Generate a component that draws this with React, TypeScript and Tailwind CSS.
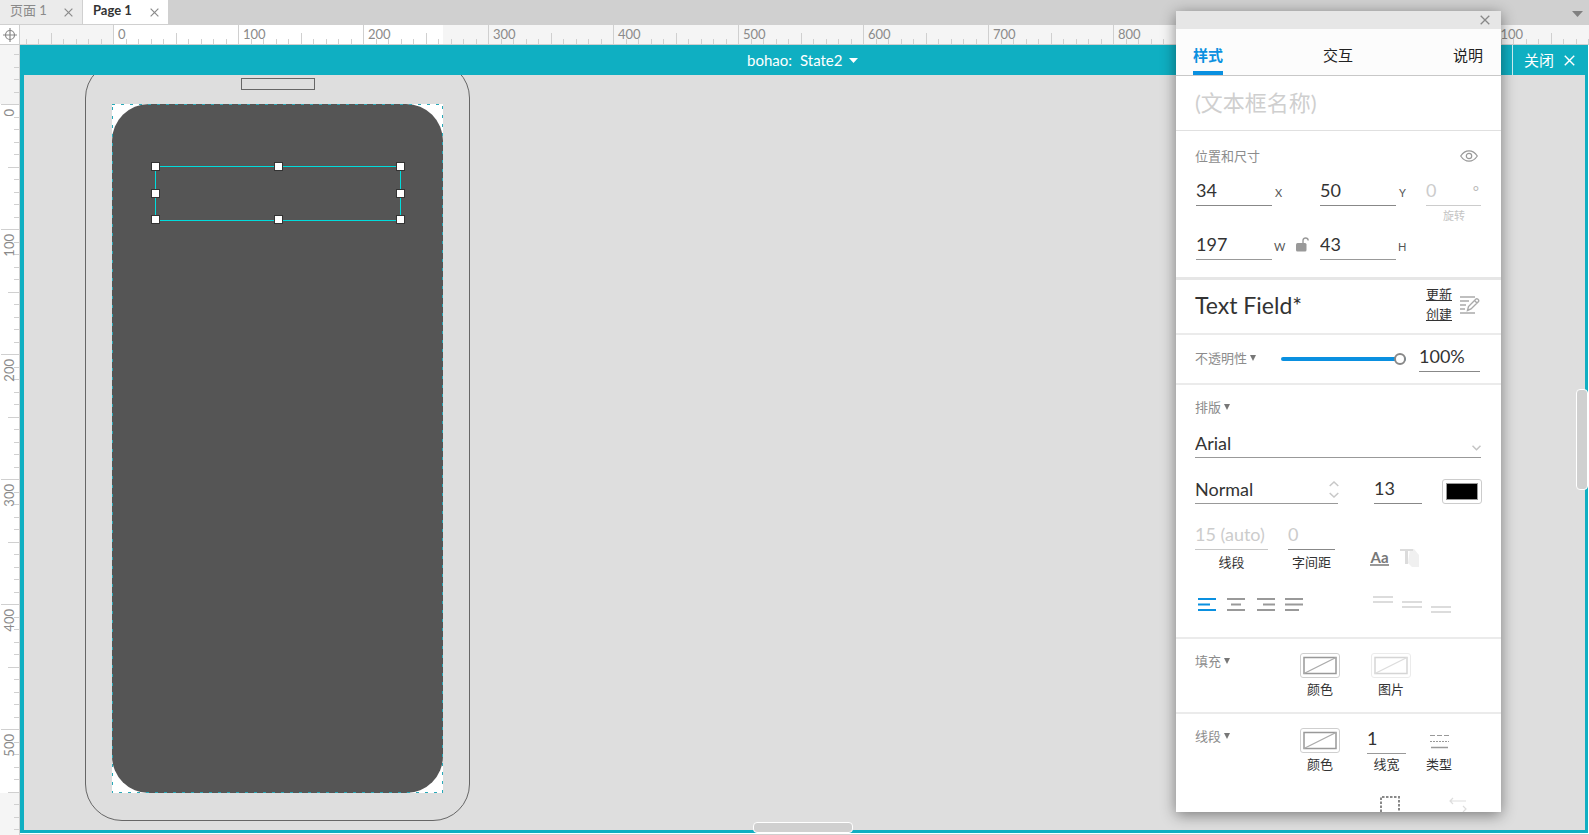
import React from "react";

const SEGMENTS = [-100, 0, 100, 200, 300, 400, 500, 600, 700, 800, 900, 1000, 1100];
const V_SEGMENTS = [-100, 0, 100, 200, 300, 400, 500];
const TICKS = [0, 1, 2, 3, 4, 5, 6, 7, 8, 9];

function Cross({ size = 10, className = "" }: { size?: number; className?: string }) {
  return (
    <svg width={size} height={size} viewBox="0 0 10 10" className={className} fill="none" stroke="currentColor" strokeWidth="1.3">
      <path d="M0.7 0.7 9.3 9.3M9.3 0.7 0.7 9.3" />
    </svg>
  );
}

function HorizontalRuler() {
  return (
    <div className="relative flex-1 overflow-hidden border-b border-[#cfcfcf] bg-[#f5f5f5]">
      <div className="absolute top-0 left-[93px] h-full w-[330px] bg-white" />
      <div className="relative -ml-8 flex h-full">
        {SEGMENTS.map((n) => (
          <div key={n} className="relative flex h-full w-[125px] shrink-0 items-end">
            {TICKS.map((t) => (
              <span
                key={t}
                className={`flex-1 border-l border-[#d0d0d0] ${t === 0 ? "h-full" : t === 5 ? "h-[11px]" : "h-[5px]"}`}
              />
            ))}
            {n >= 0 && <span className="absolute top-0 left-[5px] text-[13px] leading-[18px] text-[#8a8a8a]">{n}</span>}
          </div>
        ))}
      </div>
    </div>
  );
}

function VerticalRuler() {
  return (
    <div className="relative w-5 shrink-0 overflow-hidden border-r border-[#cfcfcf] bg-[#f5f5f5]">
      <div className="absolute top-[59px] left-0 h-[689px] w-full bg-white" />
      <div className="relative -mt-[66px] flex flex-col">
        {V_SEGMENTS.map((n) => (
          <div key={n} className="relative flex h-[125px] shrink-0 flex-col items-end">
            {TICKS.map((t) => (
              <span
                key={t}
                className={`flex-1 border-t border-[#d0d0d0] ${t === 0 ? "w-[18px]" : t === 5 ? "w-[11px]" : "w-[5px]"}`}
              />
            ))}
            {n >= 0 && (
              <span className="absolute top-[5px] left-0 rotate-180 text-[13px] leading-[18px] text-[#8a8a8a] [writing-mode:vertical-rl]">
                {n}
              </span>
            )}
          </div>
        ))}
      </div>
    </div>
  );
}

function Handle({ className }: { className: string }) {
  return <span className={`absolute size-[9px] border border-[#333] bg-white ${className}`} />;
}

function Canvas() {
  return (
    <div className="relative flex-1 overflow-hidden border-x-4 border-r-3 border-b-3 border-[#0fafc2] bg-[#dedede]">
      <div className="absolute -top-[14px] left-[61px] h-[760px] w-[385px] rounded-[37px] border border-[#666]" />
      <div className="absolute top-[3px] left-[217px] h-3 w-[74px] border border-[#666]" />
      <div className="absolute top-[29px] left-[88px] h-[689px] w-[331px] bg-white">
        <div className="h-full rounded-[37px] bg-[#555]" />
        <svg className="absolute inset-0 h-full w-full" fill="none" stroke="#28a9b8" strokeWidth="2" strokeDasharray="3 6">
          <rect width="100%" height="100%" />
        </svg>
        <div className="absolute top-[62px] left-[43px] h-[55px] w-[246px] border border-[#00dcdc]">
          <Handle className="-top-[5px] -left-[5px]" />
          <Handle className="-top-[5px] left-[118px]" />
          <Handle className="-top-[5px] -right-[5px]" />
          <Handle className="top-[22px] -left-[5px]" />
          <Handle className="top-[22px] -right-[5px]" />
          <Handle className="-bottom-1 -left-[5px]" />
          <Handle className="-bottom-1 left-[118px]" />
          <Handle className="-right-[5px] -bottom-1" />
        </div>
      </div>
    </div>
  );
}

type FieldProps = {
  label: string;
  value: string;
  className: string;
};

function Field({ label, value, className }: FieldProps) {
  return (
    <input
      aria-label={label}
      defaultValue={value}
      className={`h-7 border-b bg-transparent pb-[3px] text-[18px] leading-6 outline-none ${className}`}
    />
  );
}

function SectionTitle({ children, arrow = true }: { children: string; arrow?: boolean }) {
  return (
    <h2 className="flex h-5 items-center gap-[3px] text-[13px] leading-5 whitespace-nowrap text-[#8c8c8c]">
      {children}
      {arrow && (
        <svg width="6" height="6" viewBox="0 0 6 6" fill="#777">
          <path d="M0 0h6L3 6z" />
        </svg>
      )}
    </h2>
  );
}

function EmptySwatch({ label, faded = false }: { label: string; faded?: boolean }) {
  return (
    <button className="flex w-10 flex-col items-center text-[13px] leading-5 text-[#333]">
      <svg width="40" height="25" viewBox="0 0 40 25" fill="none" className={faded ? "opacity-40" : ""}>
        <rect x="0.5" y="0.5" width="39" height="24" rx="2.5" stroke="#cfcfcf" />
        <rect x="4" y="4.5" width="32" height="16" stroke="#999" strokeWidth="1.5" />
        <path d="M4 20.500 36 4.500" stroke="#aaa" strokeWidth="1.3" />
      </svg>
      <span className="mt-px">{label}</span>
    </button>
  );
}

function PositionSection() {
  return (
    <section className="h-[149px] shrink-0 border-b-3 border-[#e6e6e6] pr-5 pl-[19px]">
      <div className="flex items-center justify-between pt-[15px]">
        <SectionTitle arrow={false}>位置和尺寸</SectionTitle>
        <button aria-label="Visible" className="mr-[3px]">
          <svg width="18" height="12" viewBox="0 0 18 12" fill="none" stroke="#999" strokeWidth="1.2">
            <path d="M0.700 6C3 2.500 6 0.800 9 0.800S15 2.500 17.300 6C15 9.500 12 11.200 9 11.200S3 9.500 0.700 6Z" />
            <circle cx="9" cy="6" r="2.700" />
          </svg>
        </button>
      </div>
      <div className="mt-3 flex items-end pl-px text-[11px] leading-[26px] text-[#555]">
        <Field label="X" value="34" className="w-[76px] border-[#888] text-[#333]" />
        <span className="w-12 pl-[3px]">X</span>
        <Field label="Y" value="50" className="w-[76px] border-[#888] text-[#333]" />
        <span className="w-[30px] pl-[3px]">Y</span>
        <span className="relative">
          <Field label="旋转" value="0" className="block w-[55px] border-[#ccc] text-[#ccc]" />
          <span className="absolute top-0 right-[2px] text-[15px] text-[#bbb]">°</span>
        </span>
      </div>
      <div className="flex h-5 justify-end pr-[16px] text-[11px] leading-5 text-[#c4c4c4]">旋转</div>
      <div className="mt-[6px] flex items-end pl-px text-[11px] leading-[26px] text-[#555]">
        <Field label="W" value="197" className="w-[76px] border-[#999] text-[#333]" />
        <span className="w-6 pl-[2px]">W</span>
        <button aria-label="Lock ratio" className="mb-2 w-6">
          <svg width="13" height="15" viewBox="0 0 13 15" fill="none">
            <rect x="0" y="6" width="10.500" height="8.500" rx="1.500" fill="#999" />
            <path d="M7 6V3.500C7 0.200 12 0.200 12.200 3.500" stroke="#999" strokeWidth="1.400" />
          </svg>
        </button>
        <Field label="H" value="43" className="w-[76px] border-[#999] text-[#333]" />
        <span className="pl-[2px]">H</span>
      </div>
    </section>
  );
}

function TypographySection() {
  return (
    <section className="h-[254px] shrink-0 border-b-2 border-[#ebebeb] pr-5 pl-[19px] text-[#333]">
      <div className="pt-3">
        <SectionTitle>排版</SectionTitle>
      </div>
      <div className="relative mt-[13px]">
        <select aria-label="Font" className="h-7 w-full appearance-none border-b border-[#999] pb-px text-[18px] leading-6 outline-none">
          <option>Arial</option>
        </select>
        <svg className="pointer-events-none absolute right-0 bottom-[7px]" width="9" height="6" viewBox="0 0 9 6" fill="none" stroke="#c4c4c4" strokeWidth="1.500">
          <path d="m0.500 0.700 4 4 4-4" />
        </svg>
      </div>
      <div className="mt-[18px] flex items-end">
        <div className="relative">
          <select aria-label="Weight" className="block h-7 w-[143px] appearance-none border-b border-[#999] pb-px text-[18px] leading-6 outline-none">
            <option>Normal</option>
          </select>
          <svg className="pointer-events-none absolute -right-px bottom-[6px]" width="10" height="17" viewBox="0 0 10 17" fill="none" stroke="#c8c8c8" strokeWidth="1.500">
            <path d="m0.700 5 4.300-4 4.300 4M0.700 12l4.300 4 4.300-4" />
          </svg>
        </div>
        <Field label="Size" value="13" className="ml-9 w-12 border-[#888]" />
        <button aria-label="Text color" className="ml-5 h-[25px] w-10 shrink-0 rounded-[3px] border border-[#ccc] p-[3px]">
          <span className="block h-full border border-[#999] bg-black" />
        </button>
      </div>
      <div className="mt-[18px] flex">
        <label className="w-[73px] text-center text-[13px] leading-6">
          <Field label="线段" value="15 (auto)" className="block w-full border-[#c8c8c8] text-[#ccc]" />
          线段
        </label>
        <label className="ml-5 w-[47px] text-center text-[13px] leading-6 whitespace-nowrap">
          <Field label="字间距" value="0" className="block w-full border-[#888] text-[#ccc]" />
          字间距
        </label>
        <button className="mt-[27px] ml-[35px] h-[17px] w-[19px] border-b-2 border-[#999] text-center text-[15px] leading-[14px] font-bold text-[#777]">
          Aa
        </button>
        <button aria-label="Text shadow" className="mt-[27px] ml-[11px] h-[18px]">
          <svg width="19" height="18" viewBox="0 0 19 18">
            <path d="M10 0h4l5 6v12h-7l-4-4z" fill="#f0f0f0" />
            <path d="M0 0h13v2H8v13H5V2H0z" fill="#dcdcdc" />
          </svg>
        </button>
      </div>
      <div className="mt-6 flex">
        <svg width="106" height="13" viewBox="0 0 106 13" className="ml-[3px]" strokeWidth="2">
          <path d="M0 1h18M0 6.500h12M0 12h18" stroke="#0a90e0" />
          <path d="M29 1h18M33 6.500h10M29 12h18M59 1h18M65 6.500h12M59 12h18M87 1h18M87 6.500h18M87 12h14" stroke="#999" />
        </svg>
        <svg width="80" height="20" viewBox="0 0 80 20" className="-mt-[2px] ml-[69px]" stroke="#dcdcdc" strokeWidth="2">
          <path d="M0 1h20M0 6h20M29 6h20M29 11h20M58 11h20M58 16h20" />
        </svg>
      </div>
    </section>
  );
}

function StylePanel() {
  return (
    <aside className="absolute top-[11px] right-[88px] bottom-[23px] flex w-[325px] flex-col overflow-hidden bg-white shadow-[0_3px_14px_rgba(0,0,0,0.45)]">
      <div className="flex h-[18px] shrink-0 items-center justify-end bg-[#e6e6e6] pr-[11px] text-[#888]">
        <button aria-label="Close panel">
          <Cross />
        </button>
      </div>
      <nav className="flex h-[47px] shrink-0 items-end justify-between border-b border-[#c8c8c8] bg-[#fcfcfc] pr-[18px] pl-[17px] text-[15px] text-[#222]">
        <button className="h-[37px] border-b-4 border-[#0a90e0] leading-[30px] font-bold text-[#0a90e0]">样式</button>
        <button className="h-[37px] border-b-4 border-transparent leading-[30px]">交互</button>
        <button className="h-[37px] border-b-4 border-transparent leading-[30px]">说明</button>
      </nav>
      <div className="flex h-[55px] shrink-0 items-center border-b border-[#e0e0e0] pl-[19px]">
        <input
          aria-label="Name"
          placeholder="(文本框名称)"
          className="w-full text-[22px] leading-8 outline-none placeholder:text-[#cfcfcf]"
        />
      </div>

      <PositionSection />

      <section className="flex h-[55px] shrink-0 items-center border-b-2 border-[#ebebeb] pr-[21px] pb-1 pl-[19px] text-[#333]">
        <h1 className="flex-1 text-[23px] leading-8">Text Field*</h1>
        <div className="flex flex-col pb-[2px] text-[13px] leading-5 underline">
          <a href="#update">更新</a>
          <a href="#create">创建</a>
        </div>
        <button aria-label="Manage styles" className="ml-2">
          <svg width="20" height="18" viewBox="0 0 20 18" fill="none" stroke="#aaa" strokeWidth="1.400">
            <path d="M0 1h15M0 5h9M0 9h6M0 13h5M0 17h15" />
            <path d="m7.500 14.500 1-4 7.500-7.500c1-1 3.500 1 2.500 2.500l-7.500 7.500zM14.500 4.500l2.500 2.500" />
          </svg>
        </button>
      </section>

      <section className="flex h-[50px] shrink-0 items-center border-b-2 border-[#ebebeb] pr-[21px] pl-[19px]">
        <div className="pb-[2px]">
          <SectionTitle>不透明性</SectionTitle>
        </div>
        <input
          type="range"
          aria-label="Opacity"
          defaultValue={100}
          className="ml-auto h-[13px] w-[125px] appearance-none bg-transparent [&::-webkit-slider-runnable-track]:h-1 [&::-webkit-slider-runnable-track]:rounded-full [&::-webkit-slider-runnable-track]:bg-[#0a90e0] [&::-webkit-slider-thumb]:-mt-1 [&::-webkit-slider-thumb]:size-3 [&::-webkit-slider-thumb]:appearance-none [&::-webkit-slider-thumb]:rounded-full [&::-webkit-slider-thumb]:border-2 [&::-webkit-slider-thumb]:border-[#888] [&::-webkit-slider-thumb]:bg-white"
        />
        <Field label="Opacity value" value="100%" className="mb-[3px] ml-[13px] w-[61px] border-[#888] text-[#333]" />
      </section>

      <TypographySection />

      <section className="flex h-[75px] shrink-0 border-b-2 border-[#ebebeb] pl-[19px]">
        <div className="w-[105px] pt-3">
          <SectionTitle>填充</SectionTitle>
        </div>
        <div className="flex gap-[31px] pt-[14px]">
          <EmptySwatch label="颜色" />
          <EmptySwatch label="图片" faded />
        </div>
      </section>

      <section className="shrink-0 pl-[19px]">
        <div className="flex">
          <div className="w-[105px] pt-3">
            <SectionTitle>线段</SectionTitle>
          </div>
          <div className="flex pt-[14px]">
            <EmptySwatch label="颜色" />
            <label className="-mt-[2px] ml-[27px] w-[39px] text-center text-[13px] leading-5 text-[#333]">
              <Field label="线宽" value="1" className="block w-full border-[#999]" />
              线宽
            </label>
            <button className="ml-[17px] flex w-8 flex-col items-center text-[13px] leading-5 text-[#333]">
              <svg width="19" height="15" viewBox="0 0 19 15" className="mt-[6px] mb-[5px]" fill="none" stroke="#999">
                <path d="M0 1.500h19" strokeDasharray="5 2" />
                <path d="M0 7.500h19" strokeDasharray="2 1" />
                <path d="M1 13.500h17" strokeWidth="1.500" />
              </svg>
              类型
            </button>
          </div>
        </div>
        <div className="mt-[22px] flex pl-[185px]">
          <svg width="20" height="20" viewBox="0 0 20 20" fill="none" stroke="#888" strokeWidth="2">
            <path d="M1 20V1h18v19" strokeDasharray="2.500 1.500" />
          </svg>
          <svg width="18" height="16" viewBox="0 0 18 16" className="ml-[49px]" fill="none" stroke="#ddd" strokeWidth="1.200">
            <path d="M17 5H1M4 2 1 5l3 3M14 10l3 3-3 3" />
          </svg>
        </div>
      </section>
    </aside>
  );
}

export default function App() {
  return (
    <div className="relative flex h-screen flex-col overflow-hidden bg-white font-['Lato','Noto_Sans_CJK_SC',sans-serif]">
      <header className="flex h-[25px] shrink-0 items-start bg-[#d0d0d0] text-[13px] leading-5 text-[#8a8a8a]">
        <div className="flex h-6 w-[82px] items-center justify-between bg-[#ebebeb] pr-[9px] pl-[10px]">
          <button className="-mt-1">页面 1</button>
          <button aria-label="Close 页面 1">
            <Cross size={9} />
          </button>
        </div>
        <div className="ml-px flex h-6 w-[85px] items-center justify-between bg-white pr-[9px] pl-[10px]">
          <button className="-mt-1 font-bold text-[#333]">Page 1</button>
          <button aria-label="Close Page 1">
            <Cross size={9} />
          </button>
        </div>
        <button aria-label="All tabs" className="mt-[11px] mr-[6px] ml-auto">
          <svg width="11" height="6" viewBox="0 0 11 6" fill="#808080">
            <path d="M0 0h11L5.500 6z" />
          </svg>
        </button>
      </header>

      <div className="flex h-5 shrink-0">
        <div className="flex w-5 shrink-0 items-center justify-center border-r border-b border-[#cfcfcf] bg-white">
          <svg width="14" height="14" viewBox="0 0 14 14" fill="none" stroke="#888" strokeWidth="1.200">
            <circle cx="7" cy="7" r="4.500" />
            <path d="M7 0v14M0 7h14" />
          </svg>
        </div>
        <HorizontalRuler />
      </div>

      <div className="flex min-h-0 flex-1">
        <VerticalRuler />
        <main className="relative flex min-w-0 flex-1 flex-col border-b border-[#cfcfcf] pr-px pb-px">
          <div className="relative flex h-[30px] shrink-0 items-center justify-center bg-[#0fafc2] pr-[3px] text-[15px] text-white">
            <label htmlFor="state">bohao:</label>
            <select id="state" className="ml-2 appearance-none bg-transparent outline-none">
              <option>State2</option>
            </select>
            <svg width="9" height="5" viewBox="0 0 9 5" fill="white" className="mt-px ml-[6px]">
              <path d="M0 0h9L4.500 5z" />
            </svg>
            <button className="absolute top-0 right-0 flex h-full items-center gap-[10px] border-l border-white/80 pr-[13px] pl-[11px]">
              关闭
              <Cross size={11} />
            </button>
          </div>
          <Canvas />
          <div className="absolute bottom-px left-[733px] h-[11px] w-[100px] rounded-[4px] border border-white bg-[#d0d0d0]" />
          <div className="absolute top-[344px] right-px h-[101px] w-[12px] rounded-[4px] border border-white bg-[#d0d0d0]" />
        </main>
      </div>

      <StylePanel />
    </div>
  );
}
